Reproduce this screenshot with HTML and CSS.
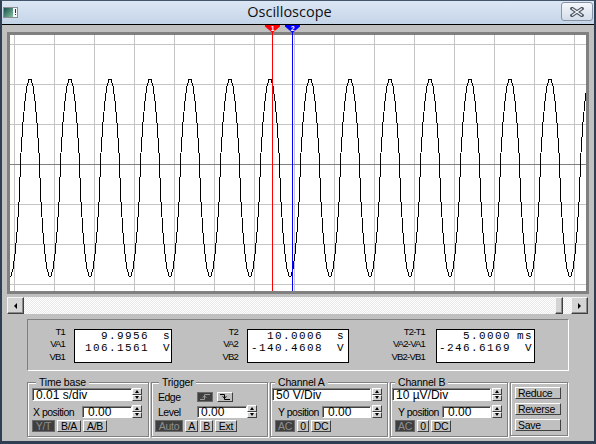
FILE: index.html
```html
<!DOCTYPE html>
<html>
<head>
<meta charset="utf-8">
<title>Oscilloscope</title>
<link rel="stylesheet" href="styles.css">
</head>
<body>
<div class="window">
  <div class="titlebar">
    <svg class="app-icon" width="15" height="11" viewBox="0 0 15 11">
      <defs>
        <linearGradient id="ig" x1="0" y1="0" x2="1" y2="1">
          <stop offset="0" stop-color="#15504c"/>
          <stop offset="1" stop-color="#86c0a0"/>
        </linearGradient>
      </defs>
      <rect x="0.5" y="0.5" width="14" height="10" fill="#f4f6f8" stroke="#8b9096"/>
      <rect x="1" y="1" width="9" height="9" fill="url(#ig)"/>
      <rect x="12" y="2" width="1" height="4" fill="#333"/>
      <rect x="12" y="7" width="1" height="1" fill="#333"/>
    </svg>
    <div class="title">Oscilloscope</div>
    <div class="close-btn">
      <svg width="14" height="10" viewBox="0 0 14 10">
        <path d="M2 1.5 L12 8.5 M12 1.5 L2 8.5" stroke="#4d5663" stroke-width="3.4" stroke-linecap="square"/>
        <path d="M2 1.5 L12 8.5 M12 1.5 L2 8.5" stroke="#f3f5f8" stroke-width="1.3"/>
      </svg>
    </div>
  </div>

  <div class="client">
    <svg class="scope" width="582" height="269" viewBox="0 0 582 269">
      <defs>
        <clipPath id="screen"><rect x="3" y="10" width="576" height="256"/></clipPath>
        <polyline id="cyc" fill="none" stroke="#000" stroke-width="1" shape-rendering="crispEdges"
          points="-19,251 -17,243.7 -15,229.2 -13,207.5 -11,177.2 -9,127.8 -7,97.5 -5,75.9 -3,61.3 -1,54 1,54 3,61.3 5,75.9 7,97.5 9,127.8 11,177.2 13,207.5 15,229.2 17,243.7 19,251 21,251"/>
      </defs>
      <rect x="1.5" y="8.5" width="579" height="259" fill="#fff" stroke="#808080" stroke-width="3"/>
      <path stroke="#c4c4c4" stroke-width="1" fill="none"
        d="M7.5 10V266M47.5 10V266M87.5 10V266M127.5 10V266M167.5 10V266M207.5 10V266M247.5 10V266M287.5 10V266M327.5 10V266M367.5 10V266M407.5 10V266M447.5 10V266M487.5 10V266M527.5 10V266M567.5 10V266
           M3 19.5H579M3 59.5H579M3 99.5H579M3 179.5H579M3 219.5H579M3 259.5H579"/>
      <path stroke="#808080" stroke-width="1" d="M3 139.5H579"/>
      <g clip-path="url(#screen)">
        <use href="#cyc" x="-17"/>
        <use href="#cyc" x="23"/>
        <use href="#cyc" x="63"/>
        <use href="#cyc" x="103"/>
        <use href="#cyc" x="143"/>
        <use href="#cyc" x="183"/>
        <use href="#cyc" x="223"/>
        <use href="#cyc" x="263"/>
        <use href="#cyc" x="303"/>
        <use href="#cyc" x="343"/>
        <use href="#cyc" x="383"/>
        <use href="#cyc" x="423"/>
        <use href="#cyc" x="463"/>
        <use href="#cyc" x="503"/>
        <use href="#cyc" x="543"/>
        <use href="#cyc" x="583"/>
      </g>
      <path stroke="#ff0000" stroke-width="1" d="M265.5 7V266"/>
      <path stroke="#0000ff" stroke-width="1" d="M285.5 7V266"/>
      <polygon fill="#ff0000" points="258,0 273,0 273,1.5 265.5,8 258,1.5"/>
      <polygon fill="#0000ff" points="278,0 293,0 293,1.5 285.5,8 278,1.5"/>
      <text class="mk" x="265.6" y="6">1</text>
      <text class="mk" x="285.6" y="6">2</text>
    </svg>

    <div class="hscroll">
      <div class="sb-btn"><span class="arr-l"></span></div>
      <div class="sb-track"><div class="sb-thumb"></div></div>
      <div class="sb-btn"><span class="arr-r"></span></div>
    </div>

    <div class="readouts">
      <div class="readout rd1">
        <div class="rd-labels"><span>T1</span><span>VA1</span><span>VB1</span></div>
        <div class="lcd">
          <div class="lcd-row"><span class="num">9.9956</span><span class="unit">s</span></div>
          <div class="lcd-row"><span class="num">106.1561</span><span class="unit">V</span></div>
        </div>
      </div>
      <div class="readout rd2">
        <div class="rd-labels"><span>T2</span><span>VA2</span><span>VB2</span></div>
        <div class="lcd">
          <div class="lcd-row"><span class="num">10.0006</span><span class="unit">s</span></div>
          <div class="lcd-row"><span class="num">-140.4608</span><span class="unit">V</span></div>
        </div>
      </div>
      <div class="readout rd3">
        <div class="rd-labels"><span>T2-T1</span><span>VA2-VA1</span><span>VB2-VB1</span></div>
        <div class="lcd">
          <div class="lcd-row"><span class="num">5.0000</span><span class="unit">ms</span></div>
          <div class="lcd-row"><span class="num">-246.6169</span><span class="unit">V</span></div>
        </div>
      </div>
    </div>

    <div class="controls">
      <fieldset class="group g-time">
        <legend>Time base</legend>
        <div class="row r1">
          <div class="field sel w-tsel">0.01 s/div</div>
          <div class="spin"><span class="sp-up"></span><span class="sp-dn"></span></div>
        </div>
        <div class="row r2">
          <span class="lbl w-xl">X position</span>
          <div class="field inp w-in">0.00</div>
          <div class="spin"><span class="sp-up"></span><span class="sp-dn"></span></div>
        </div>
        <div class="row r3 btns-time">
          <span class="btn on w-yt">Y/T</span>
          <span class="btn w-ba">B/A</span>
          <span class="btn w-ba">A/B</span>
        </div>
      </fieldset>

      <fieldset class="group g-trig">
        <legend>Trigger</legend>
        <div class="row r1 r1-trig">
          <span class="lbl w-tl">Edge</span>
          <span class="edge on">
            <svg width="12" height="8" viewBox="0 0 12 8"><path d="M1 6.5H5.5V1.5H11M3.5 4.5L5.5 3L7.5 4.5" fill="none" stroke="#9a9a9a" stroke-width="1"/></svg>
          </span>
          <span class="edge">
            <svg width="12" height="8" viewBox="0 0 12 8"><path d="M1 1.5H5.5V6.5H11M3.5 3.5L5.5 5L7.5 3.5" fill="none" stroke="#000" stroke-width="1"/></svg>
          </span>
        </div>
        <div class="row r2 r2-trig">
          <span class="lbl w-tl">Level</span>
          <div class="field inp w-in">0.00</div>
          <div class="spin"><span class="sp-up"></span><span class="sp-dn"></span></div>
        </div>
        <div class="row r3 btns-trig">
          <span class="btn on w-auto">Auto</span>
          <span class="btn w-ab">A</span>
          <span class="btn w-ab">B</span>
          <span class="btn w-ext">Ext</span>
        </div>
      </fieldset>

      <fieldset class="group g-ch">
        <legend>Channel A</legend>
        <div class="row r1">
          <div class="field sel w-csel">50 V/Div</div>
          <div class="spin"><span class="sp-up"></span><span class="sp-dn"></span></div>
        </div>
        <div class="row r2">
          <span class="lbl w-yl">Y position</span>
          <div class="field inp w-cin">0.00</div>
          <div class="spin"><span class="sp-up"></span><span class="sp-dn"></span></div>
        </div>
        <div class="row r3 btns-ch">
          <span class="btn on w-ac">AC</span>
          <span class="btn w-zero">0</span>
          <span class="btn w-ac">DC</span>
        </div>
      </fieldset>

      <fieldset class="group g-ch">
        <legend>Channel B</legend>
        <div class="row r1">
          <div class="field sel w-csel">10 µV/Div</div>
          <div class="spin"><span class="sp-up"></span><span class="sp-dn"></span></div>
        </div>
        <div class="row r2">
          <span class="lbl w-yl">Y position</span>
          <div class="field inp w-cin">0.00</div>
          <div class="spin"><span class="sp-up"></span><span class="sp-dn"></span></div>
        </div>
        <div class="row r3 btns-ch">
          <span class="btn on w-ac">AC</span>
          <span class="btn w-zero">0</span>
          <span class="btn w-ac">DC</span>
        </div>
      </fieldset>

      <div class="group g-side">
        <span class="btn side">Reduce</span>
        <span class="btn side">Reverse</span>
        <span class="btn side">Save</span>
      </div>
    </div>
  </div>
</div>
</body>
</html>
```

FILE: styles.css
```css
* { box-sizing: border-box; }

body {
  margin: 0;
  background: #c0c0c0;
  font-family: "Liberation Sans", Arial, sans-serif;
  color: #000;
}

.window {
  width: 596px;
  height: 444px;
  display: flex;
  flex-direction: column;
  border-top: 1px solid #44556c;
  border-left: 2px solid #2f3e53;
  border-right: 2px solid #2f3e53;
  border-bottom: 3px solid #2f3e53;
  overflow: hidden;
}

/* ---------- title bar ---------- */
.titlebar {
  height: 23px;
  flex: none;
  display: flex;
  align-items: center;
  background: linear-gradient(#dce7f4, #c4d4e8);
}
.app-icon { display: block; flex: none; margin-left: 1px; }
.title {
  flex: 1;
  align-self: flex-start;
  text-align: center;
  font-family: "Open Sans", "Noto Sans", sans-serif;
  font-size: 14.5px;
  line-height: 21px;
  color: #101010;
}
.close-btn {
  align-self: flex-start;
  flex: none;
  margin: 1px 1px 0 0;
  width: 32px;
  height: 19px;
  border: 1px solid #8794a7;
  border-radius: 3px;
  background: linear-gradient(#f5f8fb, #d3dce8);
  display: flex;
  align-items: center;
  justify-content: center;
}
.close-btn svg { display: block; }

/* ---------- client ---------- */
.client {
  flex: 1;
  border-top: 1px solid #000;
  background: #c0c0c0;
  padding-left: 5px;
  display: flex;
  flex-direction: column;
  align-items: flex-start;
}
.scope { display: block; flex: none; }
.mk {
  font-family: "Liberation Sans", Arial, sans-serif;
  font-size: 7px;
  font-weight: bold;
  fill: #fff;
  text-anchor: middle;
}

/* ---------- scrollbar ---------- */
.hscroll {
  margin-top: 3px;
  width: 581px;
  height: 17px;
  display: flex;
  flex: none;
}
.sb-btn, .sb-thumb {
  width: 17px;
  height: 17px;
  flex: none;
  background: #d4d4d4;
  border: 1px solid;
  border-color: #f4f4f4 #404040 #404040 #f4f4f4;
  box-shadow: inset -1px -1px 0 #8a8a8a;
  display: flex;
  align-items: center;
  justify-content: center;
}
.sb-thumb { width: 8px; }
.arr-l {
  width: 0; height: 0;
  border-top: 3px solid transparent;
  border-bottom: 3px solid transparent;
  border-right: 3px solid #000;
}
.arr-r {
  width: 0; height: 0;
  border-top: 3px solid transparent;
  border-bottom: 3px solid transparent;
  border-left: 3px solid #000;
}
.sb-track {
  flex: 1;
  height: 17px;
  display: flex;
  justify-content: flex-end;
  padding-right: 8px;
  background: repeating-conic-gradient(#ffffff 0 25%, #e9e9e9 0 50%) 0 0 / 2px 2px;
}

/* ---------- readouts ---------- */
.readouts {
  margin: 5px 0 0 20px;
  width: 542px;
  height: 52px;
  flex: none;
  border: 1px solid;
  border-color: #808080 #ffffff #ffffff #808080;
  display: flex;
  padding-top: 9px;
}
.readout { display: flex; gap: 9px; }
.rd-labels {
  display: flex;
  flex-direction: column;
  align-items: flex-end;
  font-size: 9.5px;
  letter-spacing: -0.8px;
  line-height: 12.3px;
  margin-top: -3px;
}
.rd1 .rd-labels { width: 37px; }
.rd2 .rd-labels { width: 66px; }
.rd3 .rd-labels { width: 76px; }
.rd3 { gap: 11px; }
.lcd {
  height: 34px;
  border: 1px solid #000;
  background: #fff;
  font-family: "Liberation Mono", "Courier New", monospace;
  font-size: 11px;
  letter-spacing: 1.4px;
  line-height: 12px;
  padding-top: 0;
}
.rd1 .lcd { width: 98px; }
.rd2 .lcd { width: 102px; padding-right: 3px; }
.rd3 .lcd { width: 99px; padding-right: 1px; }
.lcd-row { display: flex; white-space: pre; }
.num { flex: 1; text-align: right; }
.unit { width: 22px; text-align: right; }

/* ---------- controls ---------- */
.controls {
  display: flex;
  gap: 2px;
  margin: 5px 0 0 20px;
  align-items: flex-start;
  flex: none;
}
.group {
  margin: 0;
  padding: 0 0 4px 0;
  border: 1px solid #808080;
  box-shadow: inset 1px 1px 0 #fff, 1px 1px 0 #fff;
  min-width: 0;
}
.group legend {
  margin-left: 4px;
  padding: 0 3px;
  font-size: 10.5px;
  letter-spacing: -0.2px;
  line-height: 12px;
  background: #c0c0c0;
}
.g-time { width: 122px; padding-left: 4px; }
.g-trig { width: 117px; padding-left: 5px; }
.g-trig legend { margin-left: 2px; }
.g-ch { width: 118px; padding-left: 1px; }
.g-ch legend { margin-left: 3px; }

.row { display: flex; align-items: center; }
.r1 { height: 13px; }
.r2 { height: 13px; margin-top: 4px; }
.r3 { height: 12px; margin-top: 2px; }
.r1-trig { margin-top: 2px; }
.r2-trig { margin-top: 2px; }

.lbl {
  font-size: 10.5px;
  letter-spacing: -0.5px;
  padding-left: 1px;
  white-space: nowrap;
  flex: none;
  overflow: hidden;
}
.w-xl { width: 50px; }
.w-tl { width: 40px; }
.w-yl { width: 45px; margin-left: 5px; }

.field {
  background: #fff;
  border: 1px solid;
  border-color: #808080 #ffffff #ffffff #808080;
  box-shadow: inset 1px 1px 0 #404040;
  font-size: 12px;
  display: flex;
  align-items: center;
  white-space: nowrap;
  flex: none;
}
.sel { height: 13px; padding-left: 3px; }
.inp { height: 12px; padding-left: 5px; }
.w-tsel { width: 100px; }
.w-in { width: 50px; }
.w-csel { width: 99px; margin-right: 1px; }
.w-cin { width: 49px; margin-right: 1px; }
.g-trig .inp { padding-left: 3px; }

.spin {
  width: 10px;
  height: 13px;
  flex: none;
  display: flex;
  flex-direction: column;
}
.sp-up, .sp-dn {
  flex: 1;
  background: #d4d4d4;
  border: 1px solid;
  border-color: #ffffff #404040 #404040 #ffffff;
  display: flex;
  align-items: center;
  justify-content: center;
}
.sp-up::before {
  content: "";
  border-left: 2.5px solid transparent;
  border-right: 2.5px solid transparent;
  border-bottom: 3px solid #000;
}
.sp-dn::before {
  content: "";
  border-left: 2.5px solid transparent;
  border-right: 2.5px solid transparent;
  border-top: 3px solid #000;
}

.btn {
  height: 12px;
  flex: none;
  display: flex;
  align-items: center;
  justify-content: center;
  font-size: 10.5px;
  letter-spacing: -0.3px;
  background: #c0c0c0;
  border: 1px solid;
  border-color: #ffffff #404040 #404040 #ffffff;
  white-space: nowrap;
}
.btn.on {
  background: #3f3f3f;
  color: #8e8e8e;
  border-color: #6a6a6a;
}
.btns-time { gap: 2px; }
.w-yt { width: 23px; }
.w-ba { width: 24px; }
.btns-trig { gap: 2px; margin-left: -2px; }
.w-auto { width: 28px; }
.w-ab { width: 13px; }
.w-ext { width: 22px; }
.btns-ch { gap: 2px; margin-left: 3px; }
.w-ac { width: 20px; }
.w-zero { width: 12px; }

.edge {
  width: 16px;
  height: 10px;
  flex: none;
  margin-right: 4px;
  display: flex;
  align-items: center;
  justify-content: center;
  background: #c0c0c0;
  border: 1px solid;
  border-color: #ffffff #404040 #404040 #ffffff;
}
.edge.on { background: #3f3f3f; border-color: #6a6a6a; }
.edge svg { display: block; }

.g-side {
  width: 58px;
  margin-top: 6px;
  padding: 4px 0 4px 4px;
  display: flex;
  flex-direction: column;
  gap: 4px;
}
.btn.side {
  width: 46px;
  justify-content: flex-start;
  padding-left: 2px;
}
```
